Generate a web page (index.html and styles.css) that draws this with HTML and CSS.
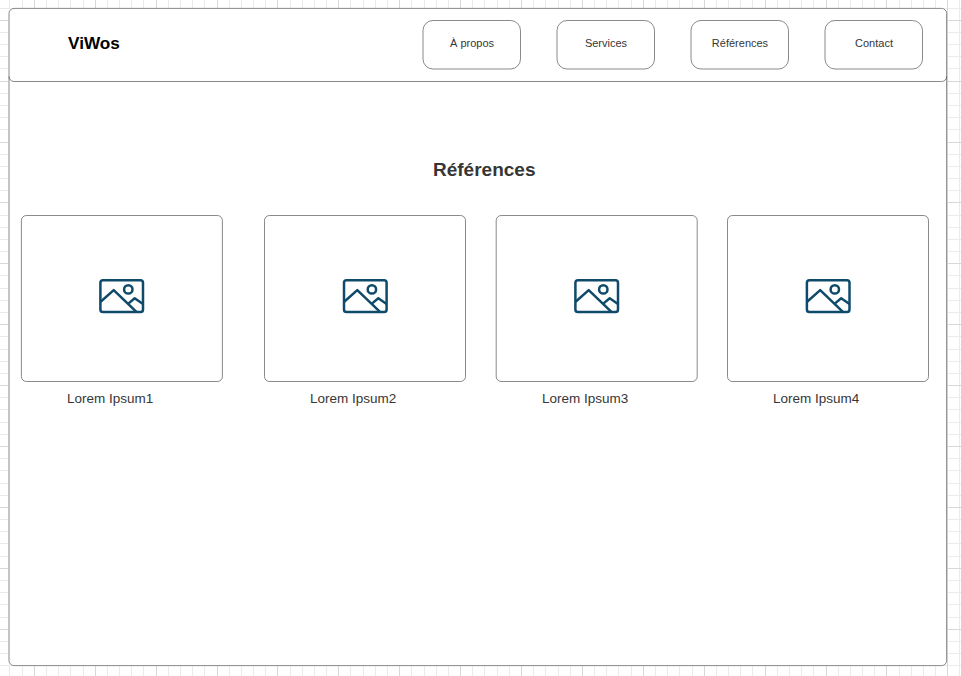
FILE: index.html
```html
<!DOCTYPE html>
<html lang="fr">
<head>
<meta charset="utf-8">
<title>ViWos</title>
<link rel="stylesheet" href="styles.css">
</head>
<body>
<svg class="symbols" width="0" height="0">
  <symbol id="image" viewBox="0 0 48 37">
    <rect x="2.4" y="2.2" width="42.6" height="31.9" rx="2.6"/>
    <circle cx="30.3" cy="11.4" r="4.2"/>
    <path d="M2.6 23.7 15.7 12.1 38.4 33.9M30.3 25.6 36.7 20.3 45 26"/>
  </symbol>
</svg>
<div class="page">
  <svg class="outline"><rect x="1" y=".4" width="937.6" height="657.2" rx="5"/></svg>
  <header class="header">
    <svg class="outline"><path d="M1 68.5a5 5 0 0 0 5 5H933.6a5 5 0 0 0 5-5"/></svg>
    <div class="brand">ViWos</div>
    <nav class="nav">
      <a class="nav-item"><svg class="outline"><rect x="1" y=".5" width="97.5" height="48.5" rx="10"/></svg>À propos</a>
      <a class="nav-item"><svg class="outline"><rect x="1" y=".5" width="97.5" height="48.5" rx="10"/></svg>Services</a>
      <a class="nav-item"><svg class="outline"><rect x="1" y=".5" width="97.5" height="48.5" rx="10"/></svg>Références</a>
      <a class="nav-item"><svg class="outline"><rect x="1" y=".5" width="97.5" height="48.5" rx="10"/></svg>Contact</a>
    </nav>
  </header>
  <main>
    <h1 class="title">Références</h1>
    <div class="cards">
      <figure class="card">
        <div class="picture"><svg class="outline"><rect x=".4" y=".5" width="201" height="166" rx="5"/></svg><svg class="icon"><use href="#image"/></svg></div>
        <figcaption>Lorem Ipsum1</figcaption>
      </figure>
      <figure class="card">
        <div class="picture"><svg class="outline"><rect x=".5" y=".5" width="201" height="166" rx="5"/></svg><svg class="icon"><use href="#image" x=".6"/></svg></div>
        <figcaption>Lorem Ipsum2</figcaption>
      </figure>
      <figure class="card">
        <div class="picture"><svg class="outline"><rect x=".2" y=".5" width="201" height="166" rx="5"/></svg><svg class="icon"><use href="#image"/></svg></div>
        <figcaption>Lorem Ipsum3</figcaption>
      </figure>
      <figure class="card">
        <div class="picture"><svg class="outline"><rect x=".5" y=".5" width="201" height="166" rx="5"/></svg><svg class="icon"><use href="#image" x=".5"/></svg></div>
        <figcaption>Lorem Ipsum4</figcaption>
      </figure>
    </div>
  </main>
</div>
</body>
</html>
```
FILE: styles.css
```css
* { box-sizing: border-box; }

body {
  margin: 0;
  padding: 8px;
  height: 676px;
  overflow: hidden;
  font-family: "Liberation Sans", Arial, sans-serif;
  color: #363636;
  background-color: #fff;
  background-image:
    repeating-linear-gradient(to right, #d8d8d8 0 1px, transparent 1px 60.9px),
    repeating-linear-gradient(to bottom, #d8d8d8 0 1px, transparent 1px 60.9px),
    repeating-linear-gradient(to right, #ebebeb 0 1px, transparent 1px 12.18px),
    repeating-linear-gradient(to bottom, #ebebeb 0 1px, transparent 1px 12.18px);
  background-size: 1100px 800px;
  background-repeat: no-repeat;
  background-position: -27.1px 0, 0 -41.2px, -27.1px 0, 0 -41.2px;
}

.symbols { position: absolute; }

.page {
  position: relative;
  width: 939px;
  height: 658px;
  background: #fff;
  border-radius: 5px;
}

.outline {
  position: absolute;
  inset: 0;
  width: 100%;
  height: 100%;
  overflow: visible;
  fill: none;
  stroke: #282828;
  stroke-width: .55;
}

.header {
  position: relative;
  display: flex;
  justify-content: space-between;
  height: 74px;
  padding: 12px 24px 0 60px;
}

.brand {
  font-size: 17.2px;
  font-weight: bold;
  line-height: 46px;
  color: #000;
}

.nav { display: flex; gap: 35px; }

.nav-item {
  position: relative;
  width: 99px;
  height: 49px;
  padding-left: 1px;
  font-size: 11px;
  line-height: 46px;
  text-align: center;
}

.title {
  margin: 76px 0 0 425px;
  font-size: 19px;
  line-height: 24px;
}

.cards {
  display: grid;
  grid-template-columns: 243px 232px 231px 202px;
  margin: 33px 0 0 13px;
}

.card { margin: 0; }

.picture {
  position: relative;
  width: 202px;
  height: 167px;
  padding: 63px 0 0 77px;
}

.icon {
  display: block;
  width: 48px;
  height: 37px;
  fill: none;
  stroke: #0f4a6b;
  stroke-width: 2.5;
  stroke-linejoin: round;
}

figcaption {
  margin: 7px 0 0 46px;
  font-size: 13.5px;
  line-height: 20px;
}
```
